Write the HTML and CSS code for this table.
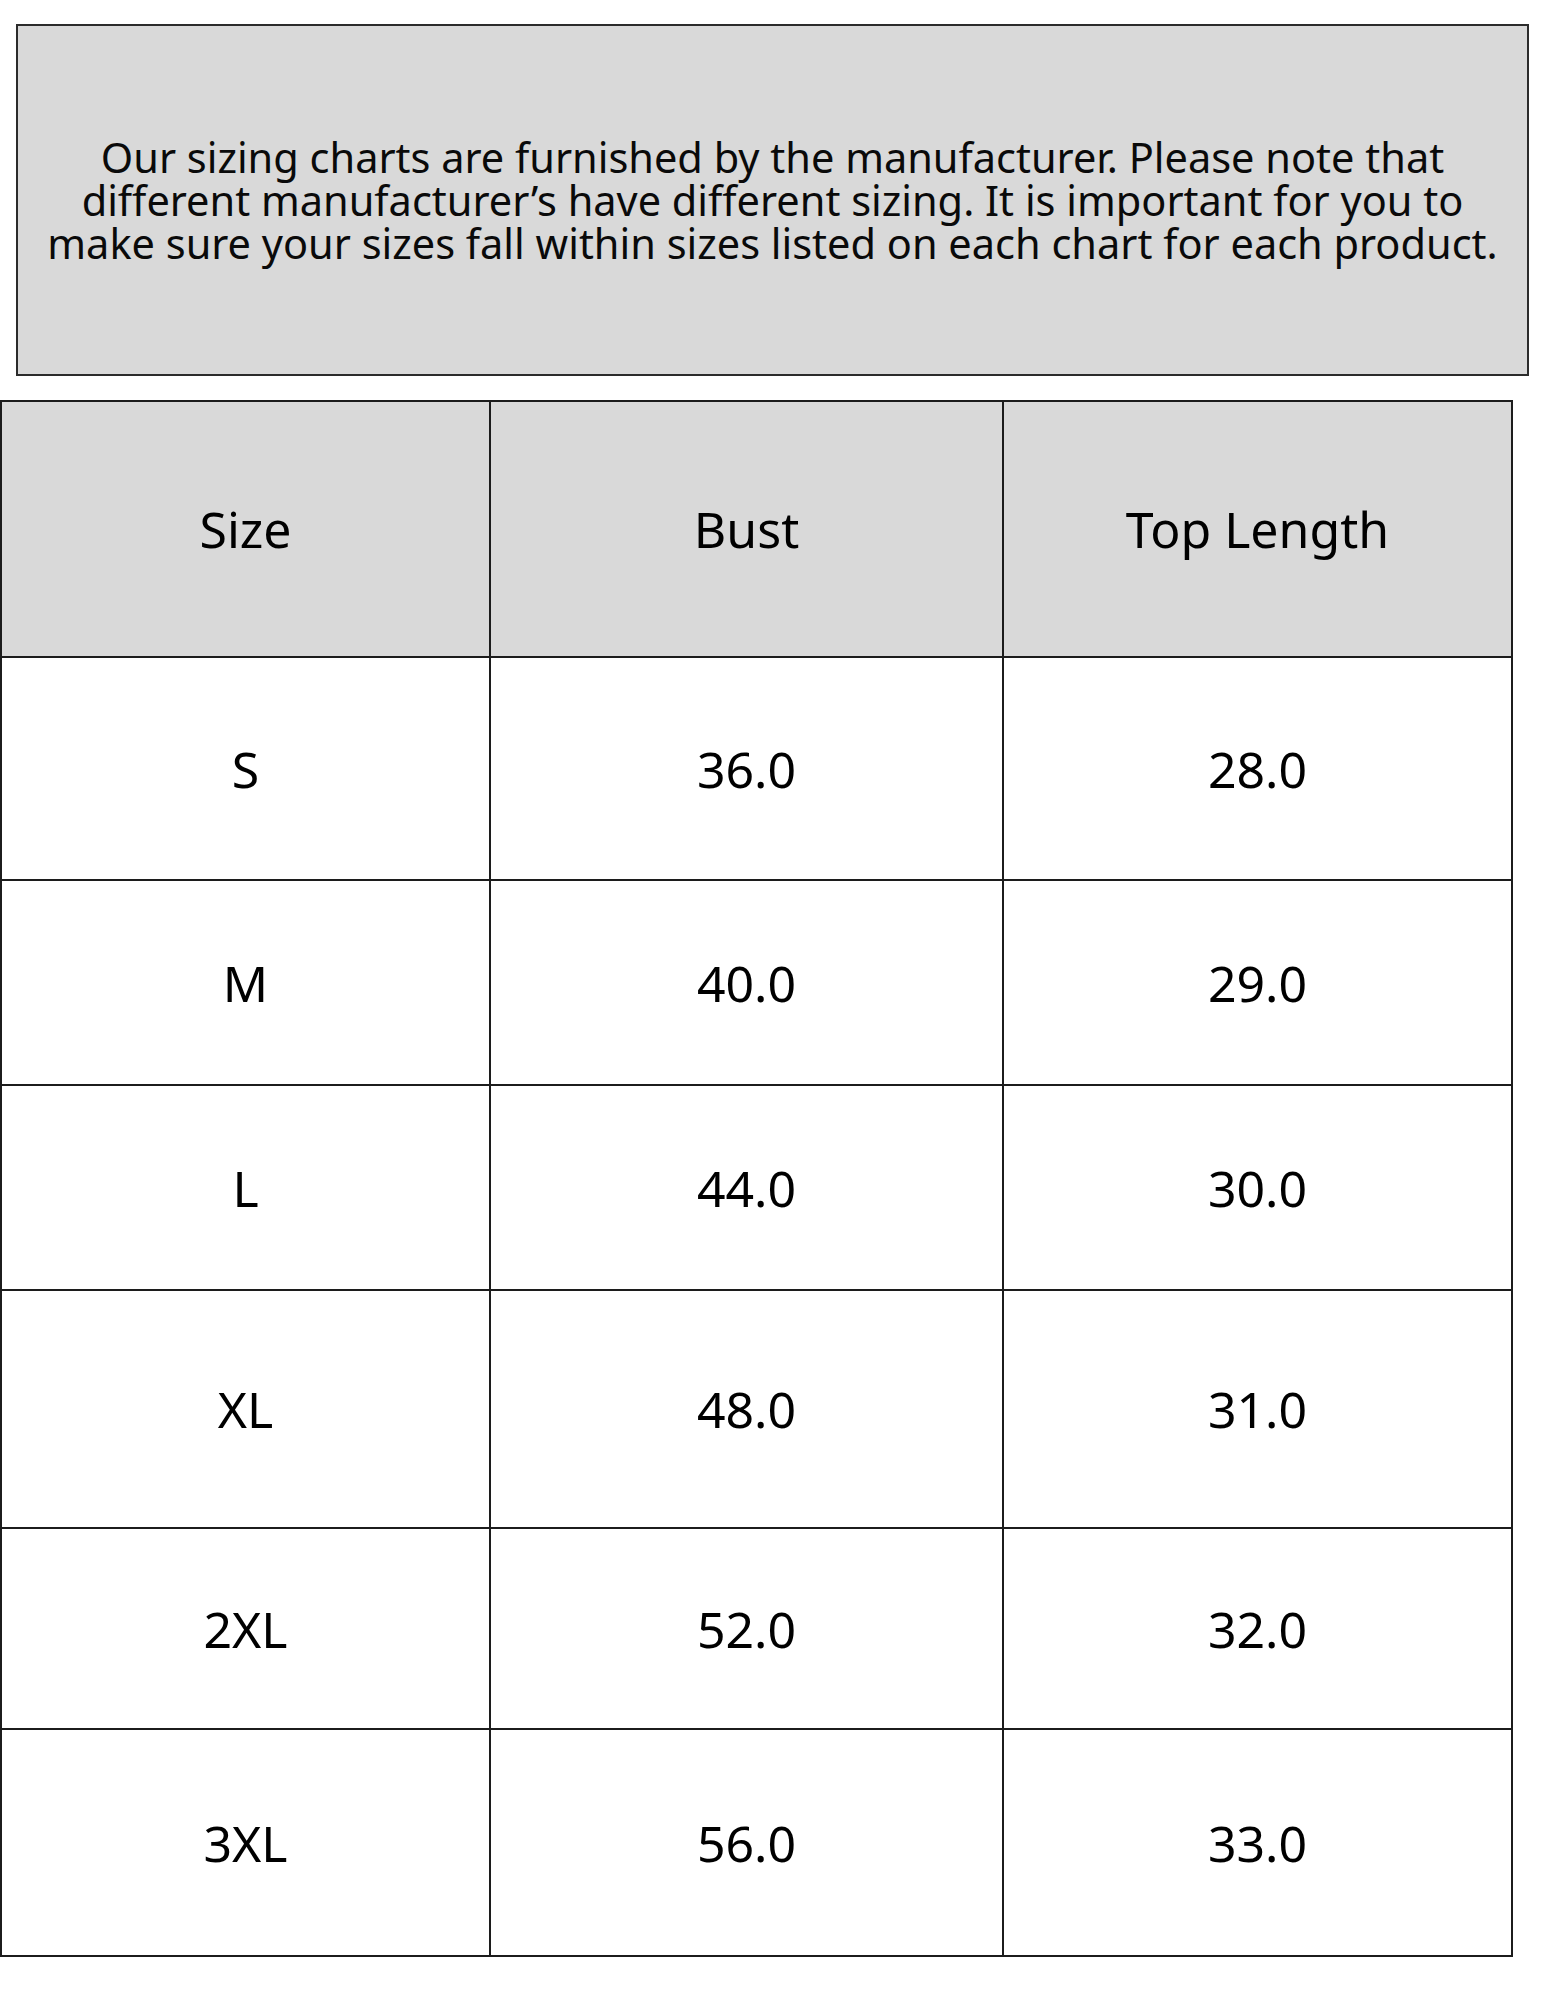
FILE: index.html
```html
<!DOCTYPE html>
<html lang="en">
<head>
<meta charset="utf-8">
<title>Size Chart</title>
<link rel="stylesheet" href="styles.css">
</head>
<body>
<div class="note">
  <p class="note-text"><span class="note-line">Our sizing charts are furnished by the manufacturer. Please note that</span><span class="note-line">different manufacturer’s have different sizing. It is important for you to</span><span class="note-line">make sure your sizes fall within sizes listed on each chart for each product.</span></p>
</div>
<div class="chart">
  <div class="cell head">Size</div>
  <div class="cell head">Bust</div>
  <div class="cell head">Top Length</div>
  <div class="cell">S</div>
  <div class="cell">36.0</div>
  <div class="cell">28.0</div>
  <div class="cell">M</div>
  <div class="cell">40.0</div>
  <div class="cell">29.0</div>
  <div class="cell">L</div>
  <div class="cell">44.0</div>
  <div class="cell">30.0</div>
  <div class="cell">XL</div>
  <div class="cell">48.0</div>
  <div class="cell">31.0</div>
  <div class="cell">2XL</div>
  <div class="cell">52.0</div>
  <div class="cell">32.0</div>
  <div class="cell">3XL</div>
  <div class="cell">56.0</div>
  <div class="cell">33.0</div>
</div>
</body>
</html>
```

FILE: styles.css
```css
html, body {
  margin: 0;
  padding: 0;
  background: #ffffff;
}
body {
  font-family: "Noto Sans", "Open Sans", sans-serif;
  color: #000;
  padding-top: 24px;
}
.note {
  margin-left: 16px;
  width: 1513px;
  height: 352px;
  box-sizing: border-box;
  border: 2px solid #2b2b2b;
  background: #d9d9d9;
  display: flex;
  align-items: center;
  justify-content: center;
}
.note-text {
  margin: 0;
  font-size: 41.5px;
  line-height: 43px;
  text-align: center;
  color: #0a0a0a;
  display: flex;
  flex-direction: column;
  align-items: center;
}
.note-line {
  display: block;
  white-space: nowrap;
}
.chart {
  margin-top: 24px;
  width: 1513px;
  box-sizing: border-box;
  display: grid;
  grid-template-columns: 487px 511px 507px;
  grid-template-rows: 254px 221px 203px 203px 236px 199px 225px;
  gap: 2px;
  padding: 2px;
  background: #1c1c1c;
}
.cell {
  background: #ffffff;
  display: flex;
  align-items: center;
  justify-content: center;
  font-size: 50px;
  color: #000;
}
.cell.head {
  background: #d9d9d9;
}
```
